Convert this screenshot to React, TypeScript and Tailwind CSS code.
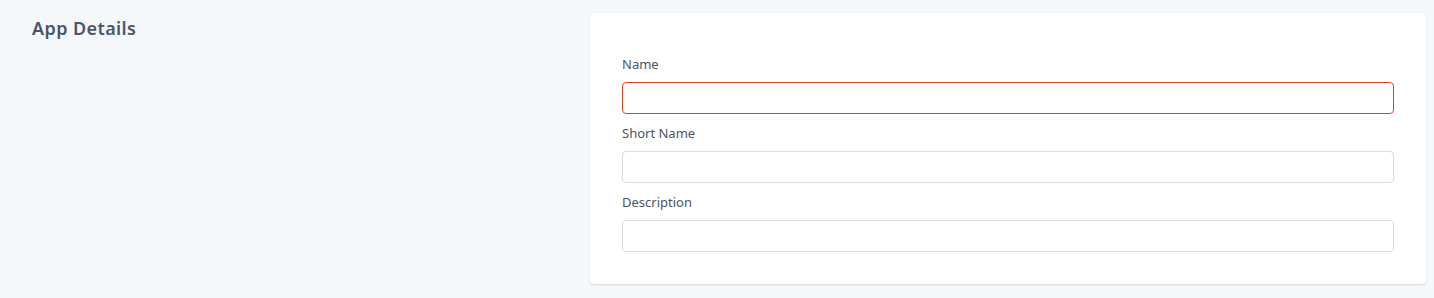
import React from 'react';

const fields = [
    { label: 'Name', error: true },
    { label: 'Short Name', error: false },
    { label: 'Description', error: false },
];

export default function App() {
    return (
        <div className="min-h-[298px] bg-[#f5f8fb] pl-8 pr-2 pt-[13px] font-['Noto_Sans',sans-serif] text-[#4a5568]">
            <div className="flex">
                {/* Section title */}
                <div className="flex-1">
                    <h2 className="mt-[1px] text-[18px] font-semibold leading-[28px] tracking-[0.4px] text-[#4a5568]">App Details</h2>
                </div>

                {/* Form card */}
                <div className="w-[836px] rounded-[4px] bg-white px-8 pt-[42px] pb-8 shadow-[0_1px_2px_rgba(0,0,0,0.14)]">
                    {fields.map((f, i) => (
                        <div key={f.label} className={i < fields.length - 1 ? 'mb-[10px]' : ''}>
                            <label className="mb-[9px] block text-[13px] leading-[18px] text-[#4a5568]">{f.label}</label>
                            <input
                                type="text"
                                className={`block h-8 w-full rounded-[4px] border bg-white px-3 text-[13px] outline-none ${
                                    f.error ? 'border-[#e8401c]' : 'border-[#dcdcdc]'
                                }`}
                            />
                        </div>
                    ))}
                </div>
            </div>
        </div>
    );
}
